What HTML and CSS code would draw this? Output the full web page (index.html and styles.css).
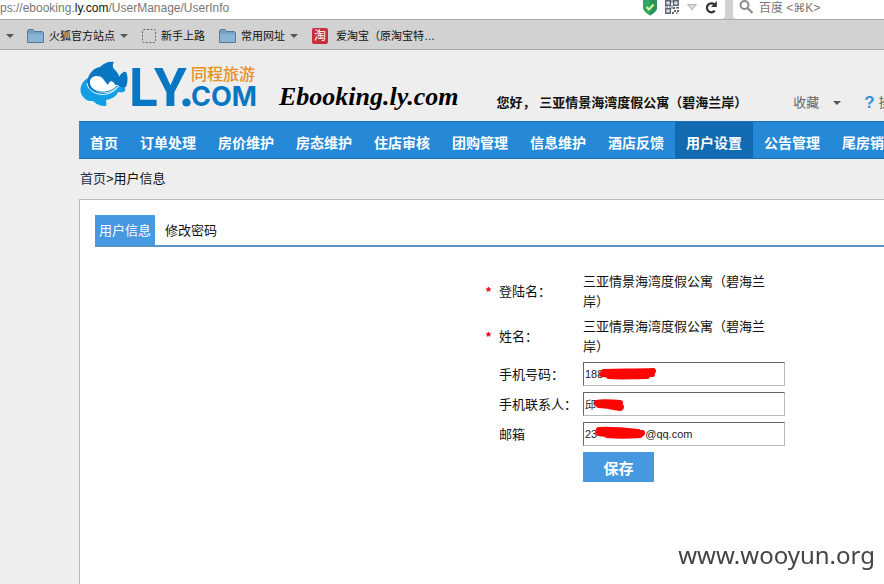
FILE: index.html
```
<!DOCTYPE html>
<html lang="zh-CN">
<head>
<meta charset="utf-8">
<title>用户信息</title>
<link rel="stylesheet" href="styles.css">
</head>
<body>
<div class="toolbar">
  <div class="address">
    <span class="url">ps://ebooking.<b>ly.com</b>/UserManage/UserInfo</span>
    <svg class="shield" width="16" height="16" viewBox="0 0 16 16"><path d="M1 0h14v7c0 4-3 6-7 8.500C4 13 1 11 1 7z" fill="#2fa866"/><path d="M8 0h7v7c0 4-3 6-7 8.500z" fill="#27955a"/><path d="M4.500 7l2.500 2.500 4.500-5" fill="none" stroke="#e3f59a" stroke-width="2"/></svg>
    <svg class="qr" width="14" height="14" viewBox="0 0 14 14"><g fill="none" stroke="#5b6372" stroke-width="1.500"><path d="M.8.8h4.500v4.500H.8zM8.700.8h4.500v4.500H8.700zM.8 8.700h4.500v4.500H.8z"/></g><path d="M2.500 2.500h1v1h-1zM10.500 2.500h1v1h-1zM2.500 10.500h1v1h-1zM6.500 0h1v3h-1zM6.500 5h1v4h-1zM8 7h2v2H8zM11 7h3v1.500h-3zM9 10h2v2H9zM12 10h2v2h-2zM7 12h2v2H7zM11 12.500h1.500V14H11zM0 6.500h3v1H0zM4 6.500h2v1H4z" fill="#5b6372"/></svg>
    <svg class="down" width="10" height="7" viewBox="0 0 10 7"><path d="M.5.500h9L5 6z" fill="#ddd" stroke="#b5b5b5"/></svg>
    <svg class="reload" width="13" height="13" viewBox="0 0 13 13"><path d="M9.800 9.800A4.500 4.500 0 1 1 9.500 3.500" fill="none" stroke="#333" stroke-width="2.200"/><path d="M11.800 0v6H6z" fill="#333"/></svg>
  </div>
  <div class="search">
    <svg width="14" height="14" viewBox="0 0 14 14"><circle cx="5.500" cy="5" r="4" fill="none" stroke="#8c8c8c" stroke-width="2"/><path d="M8.500 8l5 5" stroke="#8c8c8c" stroke-width="2.200"/></svg>
    <span>百度 &lt;⌘K&gt;</span>
  </div>
</div>
<div class="bookmarks">
  <i class="caret lead"></i>
  <a class="mark" href="#"><svg width="17" height="14" viewBox="0 0 17 14"><path d="M.5 13.500v-12l1-1H6l1.500 2h8l1 1v10z" fill="#75a0c3" stroke="#527b9e"/><path d="M1 5h15v8H1z" fill="#8cb3d2"/></svg>火狐官方站点<i class="caret"></i></a>
  <a class="mark" href="#"><svg width="14" height="14" viewBox="0 0 14 14"><rect x=".5" y=".5" width="13" height="13" rx="1" fill="none" stroke="#666" stroke-dasharray="2 1.500"/></svg>新手上路</a>
  <a class="mark" href="#"><svg width="17" height="14" viewBox="0 0 17 14"><path d="M.5 13.500v-12l1-1H6l1.500 2h8l1 1v10z" fill="#75a0c3" stroke="#527b9e"/><path d="M1 5h15v8H1z" fill="#8cb3d2"/></svg>常用网址<i class="caret"></i></a>
  <a class="mark" href="#"><span class="tao">淘</span>爱淘宝（原淘宝特…</a>
</div>
<div class="site">
  <header class="header">
    <svg class="logo" width="180" height="50" viewBox="0 0 180 50">
      <path d="M9 17C1 21-1 31 5 37c3 3 6 3 9 3 4 4 8 5 13 5 1-2 0-4 0-6 6-1 11-4 12-8 2 0 5 1 7-1 1-3-1-6-4-7L30 22z" fill="#109fe4"/>
      <path d="M8 22C9 12 15 7 21 6c4-4 9-6 14-5-2 3-1 5 0 7 3 3 5 5 5 8 2-4 5-6 7-5 2 4 2 10 0 15-3 1-6 0-8-2-3 6-9 9-17 8-8-1-13-5-14-10z" fill="#0877c3"/>
      <path d="M11 20c1-5 7-6 11-4 3 2 4 5 7 8 1-4 4-5 6-2 1 2 2 2 4 2-2 5-8 9-16 8-8-1-13-6-12-12z" fill="#fff"/>
      <path d="M8 22c1 12 22 17 32 3" fill="none" stroke="#eef7fc" stroke-width="1"/>
      <path d="M10 22c2 10 19 13 28 3" fill="none" stroke="#0877c3" stroke-width="1"/>
      <text class="logo-big" x="50 75 100" y="45">LY.</text>
      <text class="logo-small" x="112" y="45">COM</text>
      <text class="logo-cn" x="112" y="19">同程旅游</text>
    </svg>
    <span class="brand">Ebooking.ly.com</span>
    <span class="hello">您好， 三亚情景海湾度假公寓（碧海兰岸）</span>
    <a class="fav" href="#">收藏<i class="caret"></i></a>
    <a class="help" href="#"><b>?</b>操</a>
  </header>
  <nav class="nav">
    <a href="#">首页</a><a href="#">订单处理</a><a href="#">房价维护</a><a href="#">房态维护</a><a href="#">住店审核</a><a href="#">团购管理</a><a href="#">信息维护</a><a href="#">酒店反馈</a><a class="on" href="#">用户设置</a><a href="#">公告管理</a><a href="#">尾房销</a>
  </nav>
  <div class="crumbs"><a href="#">首页</a>&gt;用户信息</div>
  <main class="panel">
    <div class="tabs"><a class="tab on" href="#">用户信息</a><a class="tab" href="#">修改密码</a></div>
    <form class="form">
      <span class="star">*</span><span>登陆名：</span><span class="value">三亚情景海湾度假公寓（碧海兰岸）</span>
      <span class="star">*</span><span>姓名：</span><span class="value">三亚情景海湾度假公寓（碧海兰岸）</span>
      <label class="label" for="phone">手机号码：</label>
      <div class="field"><input id="phone" type="text" value="188"><svg class="ink" width="90" height="22" viewBox="0 0 90 22"><path d="M21 10c15-1 30 0 49-1M19 12c15 2 32-1 50 0M26 14c12 1 24 0 38 0" /></svg></div>
      <label class="label" for="contact">手机联系人：</label>
      <div class="field"><input id="contact" type="text" value="邱"><svg class="ink" width="90" height="22" viewBox="0 0 90 22"><path d="M14 11c7-2 16 0 23 0M16 13l22 2M25 14l12 2"/></svg></div>
      <label class="label" for="mail">邮箱</label>
      <div class="field"><input id="mail" type="text" value="23&#8195;&#8195;&#8195;&#8195;&nbsp;&#8202;@qq.com"><svg class="ink" width="90" height="22" viewBox="0 0 90 22"><path d="M16 8c10-1 21 0 39 2M16 11c12 3 25-1 43 0M24 13c10 1 20 1 33 0"/></svg></div>
      <button class="save" type="button">保存</button>
    </form>
  </main>
</div>
<div class="watermark">www.wooyun.org</div>
</body>
</html>
```

FILE: styles.css
```
* { box-sizing: border-box; }
body {
  margin: 0;
  min-height: 100vh;
  display: flex;
  flex-direction: column;
  overflow: hidden;
  background: #eee;
  color: #111;
  font: 13px/20px "Liberation Sans", "Noto Sans CJK SC", sans-serif;
  text-spacing-trim: space-all;
}
a { color: inherit; text-decoration: none; }
svg { flex: none; }
.caret {
  border: 4px solid transparent;
  border-top-color: #555;
  border-bottom: 0;
}
.toolbar { display: flex; gap: 8px; height: 19px; background: #d2d2d2; }
.address, .search { display: flex; background: #fff; line-height: 16px; }
.address { width: 725px; border-bottom-right-radius: 4px; align-items: flex-start; }
.url { flex: 1; color: #777; font-size: 12px; }
.url b { color: #111; font-weight: normal; }
.qr { margin-left: 7px; }
.down { margin: 4px 8px 0; }
.reload { margin: 1px 7px 0 0; }
.search { flex: 1; gap: 6px; padding-left: 6px; border-bottom-left-radius: 4px; color: #777; font-family: "Liberation Sans", "DejaVu Sans", "Noto Sans CJK SC", sans-serif; font-size: 12px; white-space: nowrap; }
.bookmarks {
  display: flex;
  align-items: center;
  height: 31px;
  padding: 2px 6px 0;
  border-top: 1px solid #aaa;
  border-bottom: 1px solid #aaa;
  background: #d2d2d2;
  font-size: 11px;
  white-space: nowrap;
}
.mark { display: flex; align-items: center; gap: 5px; margin-right: 14px; }
.lead { margin-right: 13px; }
.tao { width: 16px; border-radius: 2px; background: #c6303a; color: #fff; font-size: 12px; line-height: 16px; text-align: center; margin-right: 3px; }
.site { flex: 1; display: flex; flex-direction: column; margin-left: 79px; white-space: nowrap; }
.header { display: flex; align-items: flex-end; height: 71px; padding-bottom: 8px; }
.logo { width: 180px; margin-bottom: 2px; overflow: visible; }
.logo-big { fill: #0877c3; font: 700 53px Roboto, sans-serif; }
.logo-small { fill: #0877c3; font: 700 27px Inter, sans-serif; }
.logo-cn { font-family: "Noto Sans CJK SC", sans-serif; font-size: 16px; font-weight: 500; fill: #e79025; }
.brand { margin-left: 20px; color: #000; font: italic bold 26px/32px "Liberation Serif", serif; }
.hello { margin-left: 38px; font-weight: bold; }
.fav { display: flex; align-items: center; gap: 14px; margin-left: 46px; color: #666; }
.help { display: flex; gap: 4px; margin-left: 23px; color: #666; }
.help b { color: #3c8fd6; font-size: 17px; }
.nav {
  display: flex;
  height: 38px;
  background: #2589d8;
  border-top: 1px solid #1f70b3;
  border-bottom: 1px solid #1f70b3;
  color: #fff;
  font-size: 14px;
  font-weight: bold;
  line-height: 42px;
  overflow: hidden;
}
.nav a { flex: none; padding: 0 11px; }
.nav .on { background: #126bb0; }
.crumbs { padding: 10px 1px; }
.crumbs a { color: #1c304c; }
.panel { flex: 1; padding: 15px 0 0 15px; border: 1px solid #bbb; border-width: 1px 0 0 1px; background: #fff; }
.tabs { display: flex; gap: 6px; border-bottom: 2px solid #5a93c4; }
.tab { padding: 6px 4px 4px; }
.tab.on { background: #4699e0; color: #fff; }
.form {
  display: grid;
  grid-template-columns: 13px 84px 202px;
  align-items: center;
  row-gap: 5px;
  padding: 25px 0 0 391px;
}
.star { color: #e00000; font-weight: bold; }
.value { padding-right: 12px; white-space: normal; }
.label { grid-column: 2; }
.field { position: relative; height: 25px; }
.field input {
  display: block;
  width: 100%;
  height: 24px;
  padding: 0 1px;
  border: 1px solid #bbb;
  border-top-color: #666;
  border-left-color: #666;
  background: #fff;
  color: #222;
  font: 11px "Liberation Sans", "Noto Sans CJK SC", sans-serif;
}
.ink { position: absolute; left: 0; top: 0; fill: none; stroke: #fb0505; stroke-width: 6; stroke-linecap: round; }
.save { grid-column: 3; width: 71px; height: 30px; padding: 2px 0 0; border: 0; background: #4699e0; color: #fff; font: bold 15px/20px "Noto Sans CJK SC", sans-serif; }
.watermark { position: fixed; right: 9px; bottom: 12px; color: #444; font: 24px/34px "Noto Sans", sans-serif; }
```
